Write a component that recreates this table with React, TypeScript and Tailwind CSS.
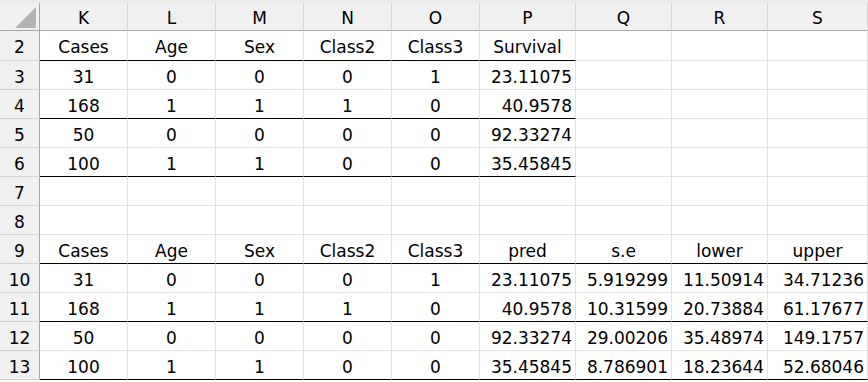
import React from 'react';

const COLS = ['K', 'L', 'M', 'N', 'O', 'P', 'Q', 'R', 'S'];

interface Row {
  n: number;
  cells: string[];
  // how many columns from K get the black bottom border
  line: number;
  head?: boolean;
}

const ROWS: Row[] = [
  { n: 2, cells: ['Cases', 'Age', 'Sex', 'Class2', 'Class3', 'Survival'], line: 6, head: true },
  { n: 3, cells: ['31', '0', '0', '0', '1', '23.11075'], line: 0 },
  { n: 4, cells: ['168', '1', '1', '1', '0', '40.9578'], line: 6 },
  { n: 5, cells: ['50', '0', '0', '0', '0', '92.33274'], line: 0 },
  { n: 6, cells: ['100', '1', '1', '0', '0', '35.45845'], line: 6 },
  { n: 7, cells: [], line: 0 },
  { n: 8, cells: [], line: 0 },
  { n: 9, cells: ['Cases', 'Age', 'Sex', 'Class2', 'Class3', 'pred', 's.e', 'lower', 'upper'], line: 9, head: true },
  { n: 10, cells: ['31', '0', '0', '0', '1', '23.11075', '5.919299', '11.50914', '34.71236'], line: 0 },
  { n: 11, cells: ['168', '1', '1', '1', '0', '40.9578', '10.31599', '20.73884', '61.17677'], line: 9 },
  { n: 12, cells: ['50', '0', '0', '0', '0', '92.33274', '29.00206', '35.48974', '149.1757'], line: 0 },
  { n: 13, cells: ['100', '1', '1', '0', '0', '35.45845', '8.786901', '18.23644', '52.68046'], line: 9 },
];

const Corner: React.FC = () => (
  <div className="h-[28px] bg-[#f0f0f0] border-r border-b border-[#a8a8a8] flex items-end justify-end pr-[3px] pb-[2px]">
    <svg width="21" height="21" viewBox="0 0 21 21">
      <polygon points="0,21 21,21 21,0" fill="#b4b4b4" />
    </svg>
  </div>
);

const App: React.FC = () => {
  return (
    <div className="w-[868px] h-[382px] bg-white overflow-hidden font-['DejaVu_Sans',sans-serif] text-[17px] leading-none text-black">
      <div className="h-[3px] bg-[#e8ebe8]" />
      <div className="grid grid-cols-[40px_88px_88px_88px_88px_88px_96px_96px_96px_100px]">
        <Corner />
        {COLS.map((c) => (
          <div
            key={c}
            className="h-[28px] bg-[#f0f0f0] border-r border-r-[#d4d4d4] border-b border-b-[#a8a8a8] flex items-end justify-center pb-[3px]"
          >
            {c}
          </div>
        ))}

        {ROWS.map((row) => (
          <React.Fragment key={row.n}>
            <div
              className={`${row.n === 2 ? 'h-[30px] pb-[4px]' : 'h-[29px] pb-[3px]'} bg-[#f0f0f0] border-r border-r-[#a8a8a8] border-b border-b-[#d4d4d4] flex items-end justify-center`}
            >
              {row.n}
            </div>
            {COLS.map((c, i) => {
              const value = row.cells[i] ?? '';
              const black = i < row.line;
              const right = !row.head && i >= 5;
              return (
                <div
                  key={c}
                  className={`${row.n === 2 ? 'h-[30px] pb-[4px]' : 'h-[29px] pb-[3px]'} border-r border-r-[#e1e1e1] border-b ${black ? 'border-b-black' : 'border-b-[#e1e1e1]'} flex items-end ${right ? 'justify-end pr-[3px]' : 'justify-center'} whitespace-nowrap`}
                >
                  {value}
                </div>
              );
            })}
          </React.Fragment>
        ))}
      </div>
    </div>
  );
};

export default App;
